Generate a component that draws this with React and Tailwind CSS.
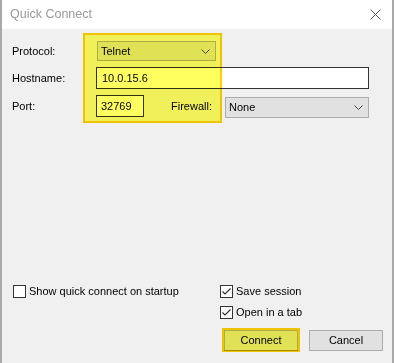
import React from "react";

const Chevron = () => (
  <svg width="9" height="5" viewBox="0 0 9 5" className="block">
    <path d="M0.5 0.5 L4.5 4.5 L8.5 0.5" fill="none" stroke="#444" strokeWidth="1" />
  </svg>
);

const Check = ({ checked, label }) => (
  <div className="flex items-center h-[13px]">
    <div className="w-[13px] h-[13px] border border-[#333] bg-white flex items-center justify-center shrink-0">
      {checked && (
        <svg width="11" height="11" viewBox="0 0 11 11">
          <path d="M1.5 5.5 L4 8 L9.5 2.5" fill="none" stroke="#333" strokeWidth="1.2" />
        </svg>
      )}
    </div>
    <span className="ml-[3px] leading-none text-black">{label}</span>
  </div>
);

export default function App() {
  return (
    <div
      className="w-[394px] h-[363px] overflow-hidden bg-[#f0f0f0] border-l-2 border-r-2 border-[#a9a9a9] flex flex-col"
      style={{ fontFamily: '"Liberation Sans", Arial, sans-serif' }}
    >
      <div className="h-[29px] bg-white flex items-center justify-between pl-[8px] pr-[10px] shrink-0">
        <span className="text-[12.5px] text-[#9a9a9a] leading-none">
          Quick Connect
        </span>
        <svg width="11" height="11" viewBox="0 0 11 11" className="mr-[1px]">
          <path d="M0.5 0.5 L10.5 10.5 M10.5 0.5 L0.5 10.5" stroke="#555" strokeWidth="1" />
        </svg>
      </div>
      <div className="relative flex-1 flex flex-col text-[11px] text-black">
        <div className="flex items-center mt-[12px] h-[20px] pl-[10px]">
          <span className="w-[85px]">Protocol:</span>
          <div className="w-[119px] h-[20px] bg-[#e1e1e1] border border-[#adadad] flex items-center justify-between pl-[3px] pr-[5px]">
            <span>Telnet</span>
            <Chevron />
          </div>
        </div>
        <div className="flex items-center mt-[6px] h-[22px] pl-[10px]">
          <span className="w-[84px]">Hostname:</span>
          <div className="w-[273px] h-[22px] bg-white border border-[#333] flex items-center pl-[5px]">
            <span>10.0.15.6</span>
          </div>
        </div>
        <div className="flex items-center mt-[6px] h-[23px] pl-[10px]">
          <span className="w-[84px]">Port:</span>
          <div className="w-[48px] h-[22px] bg-white border border-[#333] flex items-center pl-[4px] self-start">
            <span>32769</span>
          </div>
          <span className="ml-[27px] w-[54px]">Firewall:</span>
          <div className="w-[144px] h-[21px] bg-[#e1e1e1] border border-[#adadad] flex items-center justify-between pl-[3px] pr-[5px] self-end">
            <span>None</span>
            <Chevron />
          </div>
        </div>

        <div className="flex mt-[167px]">
          <div className="w-[218px] pl-[11px]">
            <Check checked={false} label="Show quick connect on startup" />
          </div>
          <div className="flex flex-col">
            <Check checked label="Save session" />
            <div className="mt-[8px]">
              <Check checked label="Open in a tab" />
            </div>
            <div className="flex mt-[11px] ml-[4px]">
              <div className="relative">
                <div className="w-[74px] h-[21px] bg-[#e1e1e1] border border-[#adadad] flex items-center justify-center">
                  Connect
                </div>
                <div className="absolute -left-[2px] -top-[2px] w-[78px] h-[24px] border-2 border-[#ffd000] bg-[#ffff60] mix-blend-multiply" />
              </div>
              <div className="ml-[11px] w-[74px] h-[21px] bg-[#e1e1e1] border border-[#adadad] flex items-center justify-center">
                Cancel
              </div>
            </div>
          </div>
        </div>

        <div className="absolute left-[81px] top-[4px] w-[139px] h-[90px] border-2 border-[#ffd000] bg-[#ffff60] mix-blend-multiply pointer-events-none" />
      </div>
    </div>
  );
}
